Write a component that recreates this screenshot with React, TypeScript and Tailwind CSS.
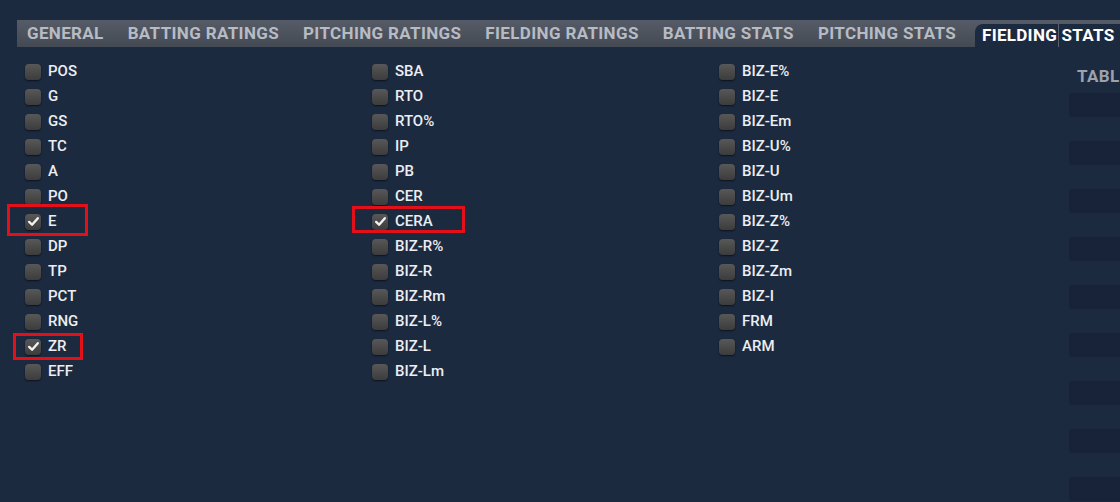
import React from "react";

const TABS = [
  "GENERAL",
  "BATTING RATINGS",
  "PITCHING RATINGS",
  "FIELDING RATINGS",
  "BATTING STATS",
  "PITCHING STATS",
];

const COLUMNS: { label: string; checked?: boolean }[][] = [
  [
    { label: "POS" }, { label: "G" }, { label: "GS" }, { label: "TC" }, { label: "A" },
    { label: "PO" }, { label: "E", checked: true }, { label: "DP" }, { label: "TP" },
    { label: "PCT" }, { label: "RNG" }, { label: "ZR", checked: true }, { label: "EFF" },
  ],
  [
    { label: "SBA" }, { label: "RTO" }, { label: "RTO%" }, { label: "IP" }, { label: "PB" },
    { label: "CER" }, { label: "CERA", checked: true }, { label: "BIZ-R%" }, { label: "BIZ-R" },
    { label: "BIZ-Rm" }, { label: "BIZ-L%" }, { label: "BIZ-L" }, { label: "BIZ-Lm" },
  ],
  [
    { label: "BIZ-E%" }, { label: "BIZ-E" }, { label: "BIZ-Em" }, { label: "BIZ-U%" },
    { label: "BIZ-U" }, { label: "BIZ-Um" }, { label: "BIZ-Z%" }, { label: "BIZ-Z" },
    { label: "BIZ-Zm" }, { label: "BIZ-I" }, { label: "FRM" }, { label: "ARM" },
  ],
];

const Check: React.FC<{ checked?: boolean }> = ({ checked }) => (
  <span className="flex h-4 w-4 flex-shrink-0 items-center justify-center rounded-[4px] bg-gradient-to-b from-[#585858] to-[#3c3c3c] shadow-[0_1px_2px_rgba(0,0,0,0.6)]">
    {checked && (
      <svg className="h-[13px] w-[13px]" viewBox="0 0 12 12" fill="none">
        <path d="M2 6.4 L4.7 9 L10 3" stroke="#f2f2f2" strokeWidth="2.2" strokeLinecap="round" strokeLinejoin="round" />
      </svg>
    )}
  </span>
);

export default function App() {
  return (
    <div
      className="relative h-[502px] w-[1120px] overflow-hidden bg-[#1c2a40] text-[#eceef2]"
      style={{ fontFamily: "Roboto, 'Liberation Sans', sans-serif" }}
    >
      <div className="pt-5 pl-[17px]">
        <div className="flex h-[27px] items-stretch bg-gradient-to-b from-[#565c67] to-[#444a54]">
          <div className="flex w-[958px] flex-shrink-0 items-center gap-[24px] overflow-hidden rounded-br-[8px] pl-[10px]">
            {TABS.map((t) => (
              <span key={t} className="whitespace-nowrap text-[17px] font-bold tracking-[0.35px] text-[#b7bbc3]">
                {t}
              </span>
            ))}
          </div>
          <div className="relative mt-1 flex flex-1 items-center rounded-tl-[8px] bg-[#1c2a40] pl-[7px]">
            <span className="whitespace-nowrap text-[17px] font-bold tracking-[0.3px] text-white">FIELDING STATS</span>
            <span className="absolute top-0 bottom-0 left-[83px] w-px bg-[#5a6070]" />
          </div>
        </div>
      </div>

      <div className="flex">
        <div className="flex w-[1069px] flex-shrink-0 pl-[25px] pt-3">
          {COLUMNS.map((col, i) => (
            <div key={i} className="flex w-[347px] flex-col">
              {col.map((item) => (
                <div key={item.label} className="flex h-[25px] items-center gap-[7px]">
                  <Check checked={item.checked} />
                  <span className="text-[15px] font-medium">{item.label}</span>
                </div>
              ))}
            </div>
          ))}
        </div>
        <div className="flex min-w-0 flex-1 flex-col">
          <div className="flex h-[46px] items-center whitespace-nowrap pl-2 pt-[14px] text-[17px] font-bold tracking-[0.4px] text-[#9ca2ac]">
            TABLE
          </div>
          <div className="flex flex-col gap-6">
            {Array.from({ length: 9 }).map((_, i) => (
              <div key={i} className="h-6 rounded-l-[3px] bg-[#18233a]" />
            ))}
          </div>
        </div>
      </div>

      <div className="absolute left-[7px] top-[204px] h-[32px] w-[81px] border-[3px] border-[#e3101a]" />
      <div className="absolute left-[13px] top-[333px] h-[27px] w-[70px] border-[3px] border-[#e3101a]" />
      <div className="absolute left-[352px] top-[206px] h-[27px] w-[113px] border-[3px] border-[#e3101a]" />
    </div>
  );
}
